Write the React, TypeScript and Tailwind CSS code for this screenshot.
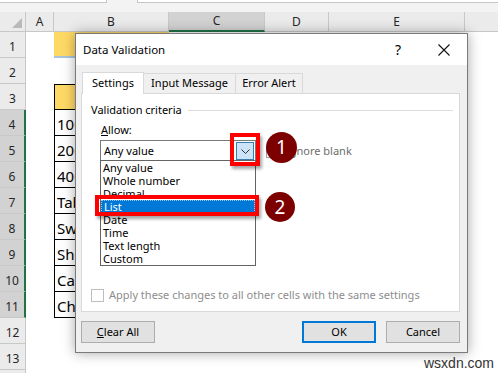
import React from "react";

const cols = [
  { l: "", w: 26 },
  { l: "A", w: 28 },
  { l: "B", w: 115 },
  { l: "C", w: 96 },
  { l: "D", w: 64 },
  { l: "E", w: 136 },
  { l: "", w: 40 },
];

const bText: Record<number, string> = {
  4: "1000",
  5: "2000",
  6: "4000",
  7: "Table",
  8: "Sweater",
  9: "Shoes",
  10: "Cap",
  11: "Chair",
};

function Sheet() {
  const rows = Array.from({ length: 14 }, (_, i) => i + 1);
  return (
    <div className="flex flex-col">
      {/* formula bar strip */}
      <div className="flex h-[12px] bg-[#f3f3f3]">
        <div className="h-[3px] w-[107px] border-b border-r border-[#c6c6c6] bg-white" />
        <div className="w-[30px]" />
        <div className="h-[3px] flex-1 border-b border-l border-[#c6c6c6] bg-white" />
      </div>
      {/* header row */}
      <div className="flex h-[20px]">
        {cols.map((c, i) => {
          const sel = c.l === "C";
          if (i === 0)
            return (
              <div
                key={i}
                className="relative shrink-0 border-b border-r border-[#c8c8c8] bg-[#ebebeb]"
                style={{ width: c.w }}
              >
                <svg className="absolute left-[12px] top-[6px]" width="10" height="10" viewBox="0 0 10 10">
                  <polygon points="10,0 10,10 0,10" fill="#b9b9b9" />
                </svg>
              </div>
            );
          return (
            <div
              key={i}
              className={
                "flex shrink-0 items-center justify-center border-r text-[12px] " +
                (sel
                  ? "border-b-2 border-r-[#c8c8c8] border-b-[#217346] bg-[#d2d2d2] text-[#262626]"
                  : "border-b border-[#c8c8c8] bg-[#ebebeb] text-[#262626]")
              }
              style={{ width: c.w, flexGrow: i === cols.length - 1 ? 1 : 0 }}
            >
              {c.l}
            </div>
          );
        })}
      </div>
      {rows.map((r) => {
        const sel = r >= 4 && r <= 11;
        return (
          <div key={r} className="flex h-[26px]">
            <div
              className={
                "flex w-[26px] shrink-0 items-center justify-center pt-[5px] text-[12px] text-[#262626] " +
                (sel
                  ? "border-b border-r-2 border-b-[#c8c8c8] border-r-[#217346] bg-[#d2d2d2]"
                  : "border-b border-r border-[#c8c8c8] bg-[#ebebeb]")
              }
            >
              {r <= 13 ? r : ""}
            </div>
            <div className="w-[28px] shrink-0 bg-white" />
            {r === 1 ? (
              <div className="w-[115px] shrink-0 border-b-2 border-[#a9c4dc] bg-[#ffd966]" />
            ) : r === 3 ? (
              <div className="w-[115px] shrink-0 border border-black bg-[#ffd966]" />
            ) : bText[r] ? (
              <div className="flex w-[115px] shrink-0 items-center border-b border-l border-r border-black bg-white pl-[2px] pt-[3px] text-[15px] text-black">
                {bText[r]}
              </div>
            ) : (
              <div className="w-[115px] shrink-0 bg-white" />
            )}
            <div className="flex-1 bg-white" />
          </div>
        );
      })}
    </div>
  );
}

function Check({ color }: { color: string }) {
  return <div className="h-[13px] w-[13px] shrink-0 border bg-white" style={{ borderColor: color }} />;
}

function Dialog() {
  const items = ["Any value", "Whole number", "Decimal", "List", "Date", "Time", "Text length", "Custom"];
  return (
    <div className="absolute left-[75px] top-[33px] flex h-[320px] w-[393px] flex-col border border-[#7a7a7a] bg-[#f0f0f0] text-[11px] text-black shadow-[0_0_12px_rgba(0,0,0,0.35)]">
      {/* title bar */}
      <div className="flex h-[31px] items-center bg-white pl-[7px]">
        <span className="pt-[1px] text-[11.5px]">Data Validation</span>
        <div className="ml-auto flex h-full">
          <div className="flex w-[46px] items-center justify-center text-[14px]">?</div>
          <div className="flex w-[46px] items-center justify-center">
            <svg width="12" height="12" viewBox="0 0 12 12">
              <path d="M0.5 0.5 L11.5 11.5 M11.5 0.5 L0.5 11.5" stroke="#111" strokeWidth="1.1" />
            </svg>
          </div>
        </div>
      </div>
      {/* body */}
      <div className="flex flex-1 flex-col px-[5px] pt-[8px]">
        <div className="flex h-[20px] items-end pl-[1px]">
          <div className="relative z-10 -mb-px flex h-[22px] w-[62px] items-center justify-center border border-b-0 border-[#d9d9d9] bg-white">
            Settings
          </div>
          <div className="flex h-[20px] w-[92px] items-center justify-center border border-b-0 border-l-0 border-[#d9d9d9] bg-[#f0f0f0]">
            Input Message
          </div>
          <div className="flex h-[20px] w-[67px] items-center justify-center border border-b-0 border-l-0 border-[#d9d9d9] bg-[#f0f0f0]">
            Error Alert
          </div>
        </div>
        <div className="relative flex h-[219px] w-[379px] flex-col border border-[#d9d9d9] bg-white">
          <div className="mt-[8px] flex h-[17px] items-center pl-[9px]">
            <span>Validation criteria</span>
            <div className="ml-[6px] mr-[6px] h-px flex-1 bg-[#dcdcdc]" />
          </div>
          <div className="mt-[3px] flex h-[17px] items-center pl-[19px]">
            <span>
              <span className="underline">A</span>llow:
            </span>
          </div>
          <div className="mt-[1px] flex items-center pl-[18px]">
            <div className="flex h-[22px] w-[156px] items-center border border-[#7a7a7a] bg-white">
              <span className="pl-[3px]">Any value</span>
              <div className="ml-auto mr-px flex h-[18px] w-[18px] items-center justify-center border border-[#3c7fb1] bg-[#cce4f7]">
                <svg width="9" height="5" viewBox="0 0 9 5">
                  <path d="M0.5 0.5 L4.5 4.5 L8.5 0.5" stroke="#333" strokeWidth="1" fill="none" />
                </svg>
              </div>
            </div>
            <div className="ml-[10px] flex items-center gap-[7px] text-[#6d6d6d]">
              <Check color="#a0a0a0" />
              <span>Ignore blank</span>
            </div>
          </div>
          <div className="mt-[125px] flex items-center gap-[5px] pl-[9px] text-[#8d8d8d]">
            <Check color="#bdbdbd" />
            <span>Apply these changes to all other cells with the same settings</span>
          </div>
          {/* dropdown list */}
          <div className="absolute left-[18px] top-[66px] flex h-[106px] w-[156px] flex-col border border-[#646464] bg-white">
            {items.map((it) => (
              <div
                key={it}
                className={
                  "flex h-[13px] items-center pl-[2px] leading-none " +
                  (it === "List" ? "border border-dotted border-[#9cc8f0] bg-[#0078d7] pl-[1px] text-white" : "")
                }
              >
                {it}
              </div>
            ))}
          </div>
        </div>
        <div className="mt-[9px] flex h-[22px] items-center">
          <div className="flex h-[22px] w-[74px] items-center justify-center border border-[#adadad] bg-[#e1e1e1]">
            <span>
              <span className="underline">C</span>lear All
            </span>
          </div>
          <div className="ml-auto flex h-[22px] w-[74px] items-center justify-center border-2 border-[#0078d7] bg-[#e1e1e1]">
            OK
          </div>
          <div className="ml-[10px] mr-[2px] flex h-[22px] w-[74px] items-center justify-center border border-[#adadad] bg-[#e1e1e1]">
            Cancel
          </div>
        </div>
      </div>
    </div>
  );
}

export default function App() {
  return (
    <div className="relative h-[373px] w-[498px] overflow-hidden bg-white font-['Noto_Sans',sans-serif]">
      <Sheet />
      <Dialog />
      {/* red highlight boxes */}
      <div className="absolute left-[230px] top-[133px] h-[33px] w-[30px] border-[4px] border-[#ff0000] shadow-[2px_3px_3px_rgba(0,0,0,0.35)]" />
      <div className="absolute left-[95px] top-[195px] h-[21px] w-[164px] border-[4px] border-[#ff0000] shadow-[2px_3px_3px_rgba(0,0,0,0.35)]" />
      {/* number badges */}
      <div className="absolute left-[266px] top-[132px] flex h-[31px] w-[31px] items-center justify-center rounded-full bg-[#7d0000] text-[19px] text-white">
        1
      </div>
      <div className="absolute left-[265px] top-[192px] flex h-[30px] w-[30px] items-center justify-center rounded-full bg-[#7d0000] text-[19px] text-white">
        2
      </div>
      <div className="absolute left-[424px] top-[353px] font-['Liberation_Sans',sans-serif] text-[14px] text-[#333]">
        wsxdn.com
      </div>
    </div>
  );
}
